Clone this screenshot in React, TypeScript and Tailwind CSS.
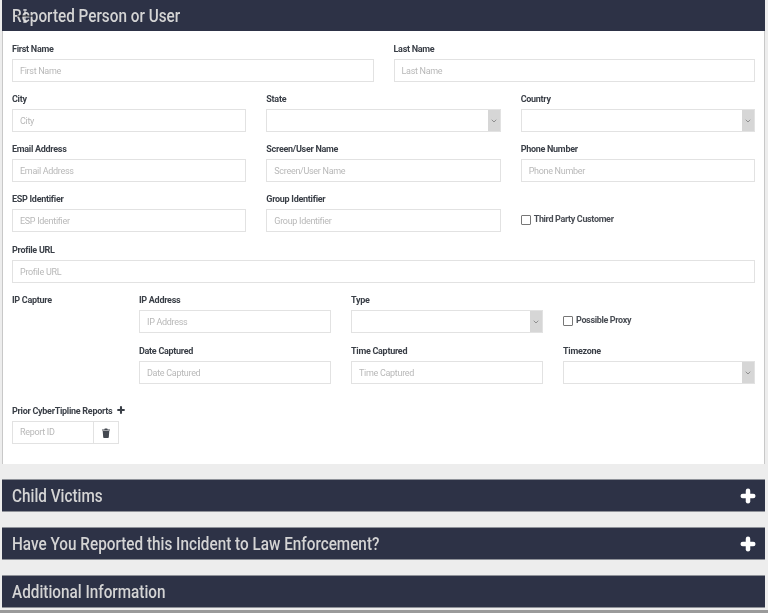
import React from 'react';
import { Plus, ChevronDown } from 'lucide-react';

const fontFamily = "font-['Roboto','Liberation_Sans',sans-serif]";

const Label = ({ children }: { children: React.ReactNode }) => (
  <label className="block h-[17px] text-[9px] leading-[14px] font-bold tracking-[-0.28px] text-[#3a3f47]">{children}</label>
);

const TextField = ({ label, placeholder }: { label: string; placeholder?: string }) => (
  <div className="min-w-0">
    <Label>{label}</Label>
    <input
      readOnly
      placeholder={placeholder ?? label}
      className="block w-full h-[23px] px-[7px] border border-[#e2e2e2] bg-white text-[9px] tracking-[-0.3px] outline-none placeholder:text-[#b8b8b8]"
    />
  </div>
);

const SelectField = ({ label }: { label: string }) => (
  <div className="min-w-0">
    <Label>{label}</Label>
    <div className="flex h-[23px] border border-[#e2e2e2] bg-white">
      <div className="flex-1" />
      <div className="flex w-[12px] items-center justify-center bg-[#d6d6d6]">
        <ChevronDown size={8} strokeWidth={2} className="text-[#6b6b6b]" />
      </div>
    </div>
  </div>
);

const CheckField = ({ label }: { label: string }) => (
  <div className="flex h-10 items-center gap-[3px] pt-[16px] text-[9px] font-bold tracking-[-0.35px] text-[#4a4e55]">
    <span className="h-[10px] w-[10px] border border-[#777] rounded-[1px] bg-white" />
    {label}
  </div>
);

const BarTitle = ({ children }: { children: React.ReactNode }) => (
  <span className="inline-block origin-left scale-x-[0.85] whitespace-nowrap text-[18px] font-medium text-[#d4d4d4]">{children}</span>
);

const SectionBar = ({ title, expand }: { title: string; expand?: boolean }) => (
  <div className="flex h-[33px] items-center justify-between bg-[#2d3246] border-y border-[#8f9299] pl-[10px] pr-[8px]">
    <BarTitle>{title}</BarTitle>
    {expand && <Plus size={18} strokeWidth={6} className="text-white" />}
  </div>
);

const TrashIcon = () => (
  <svg width="8" height="10" viewBox="0 0 8 10" fill="#444850">
    <path d="M0 1.4h2.3L2.8.4h2.4l.5 1H8v1H0zM.7 3h6.6l-.5 6.2c0 .4-.3.8-.8.8H2c-.5 0-.8-.4-.8-.8z" />
  </svg>
);

export default function App() {
  return (
    <div className={`${fontFamily} h-[613px] w-[768px] overflow-hidden bg-[#ededed] blur-[0.5px]`}>
      <div className="relative ml-[2px] w-[763px]">
        {/* Reported person header */}
        <div className="flex h-[31px] items-center bg-[#2d3246] pl-[10px]">
          <BarTitle>Reported Person or User</BarTitle>
        </div>

        {/* Resize cursor on top of the title */}
        <svg className="absolute left-[15px] top-[9px]" width="16" height="14" viewBox="0 0 16 14" fill="none" strokeWidth="1">
          <path d="M8 0v14M6 1h4M6 13h4" stroke="#e8e8e8" />
          <path d="M0 7h16" stroke="#14161f" />
        </svg>

        <div className="h-[433px] border-x border-[#c8c8c8] bg-white px-[9px] pt-[11px]">
          <div className="grid grid-cols-2 gap-x-5">
            <TextField label="First Name" />
            <TextField label="Last Name" />
          </div>
          <div className="mt-[10px] grid grid-cols-3 gap-x-5 gap-y-[10px]">
            <TextField label="City" />
            <SelectField label="State" />
            <SelectField label="Country" />
            <TextField label="Email Address" />
            <TextField label="Screen/User Name" />
            <TextField label="Phone Number" />
            <TextField label="ESP Identifier" />
            <TextField label="Group Identifier" />
            <CheckField label="Third Party Customer" />
          </div>
          <div className="mt-[11px]">
            <TextField label="Profile URL" />
          </div>

          {/* IP capture */}
          <div className="mt-[10px] grid grid-cols-[107px_1fr_1fr_1fr] gap-x-5 gap-y-[11px]">
            <Label>IP Capture</Label>
            <TextField label="IP Address" />
            <SelectField label="Type" />
            <CheckField label="Possible Proxy" />
            <div />
            <TextField label="Date Captured" />
            <TextField label="Time Captured" />
            <SelectField label="Timezone" />
          </div>

          {/* Prior reports */}
          <div className="mt-[20px]">
            <div className="flex h-[17px] items-start gap-1 text-[9px] leading-[14px] font-bold tracking-[-0.28px] text-[#3a3f47]">
              Prior CyberTipline Reports
              <Plus size={10} strokeWidth={5} className="mt-[1px]" />
            </div>
            <div className="flex h-[23px] w-[107px] border border-[#e2e2e2]">
              <input
                readOnly
                placeholder="Report ID"
                className="min-w-0 flex-1 px-[7px] text-[9px] tracking-[-0.3px] outline-none placeholder:text-[#b8b8b8]"
              />
              <div className="flex w-[25px] items-center justify-center border-l border-[#e2e2e2]">
                <TrashIcon />
              </div>
            </div>
          </div>
        </div>

        {/* Collapsed sections */}
        <div className="flex flex-col gap-[15px] pt-[15px]">
          <SectionBar title="Child Victims" expand />
          <SectionBar title="Have You Reported this Incident to Law Enforcement?" expand />
          <SectionBar title="Additional Information" />
        </div>
      </div>
      <div className="mt-[2px] h-[3px] bg-[#9a9a9a]" />
    </div>
  );
}
